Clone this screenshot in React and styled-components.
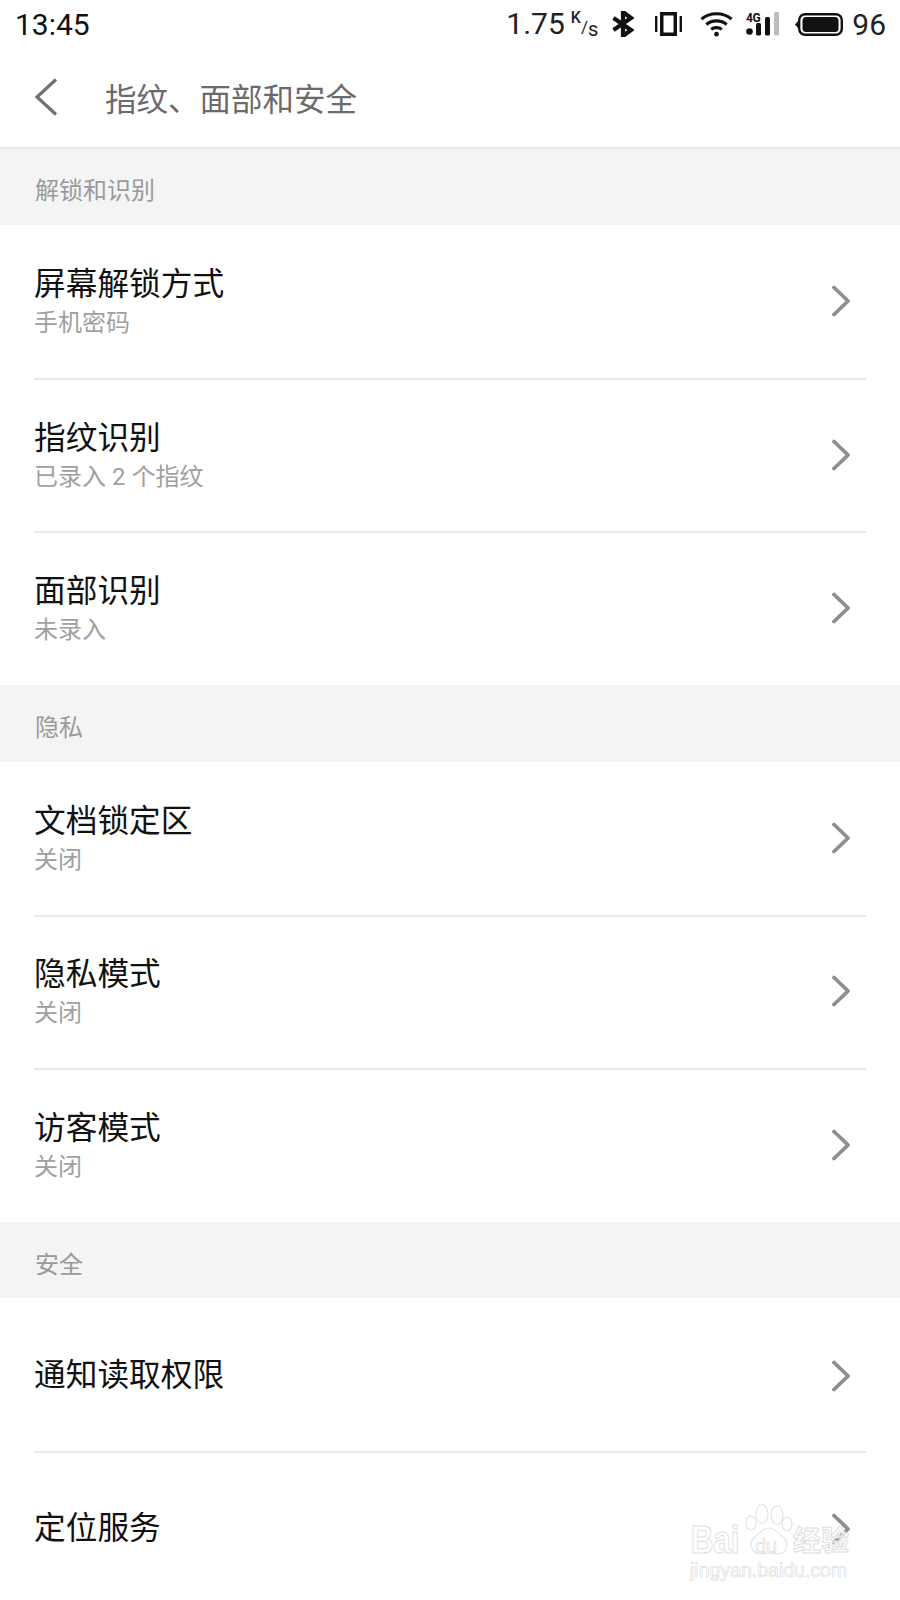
import styled, { createGlobalStyle } from "styled-components";

const sections = [
  {
    label: "解锁和识别",
    items: [
      { title: "屏幕解锁方式", sub: "手机密码" },
      { title: "指纹识别", sub: "已录入 2 个指纹" },
      { title: "面部识别", sub: "未录入" },
    ],
  },
  {
    label: "隐私",
    items: [
      { title: "文档锁定区", sub: "关闭" },
      { title: "隐私模式", sub: "关闭" },
      { title: "访客模式", sub: "关闭" },
    ],
  },
  {
    label: "安全",
    items: [{ title: "通知读取权限" }, { title: "定位服务" }],
  },
];

export default function App() {
  return (
    <Screen>
      <GlobalStyle />
      <StatusBar>
        <Clock>13:45</Clock>
        <StatusIcons>
          <Speed>
            1.75
            <SpeedK>K</SpeedK>
            <SpeedSlash>/</SpeedSlash>
            <SpeedS>s</SpeedS>
          </Speed>
          <Icon $gap={14} width="22" height="26" viewBox="0 0 22 26" fill="none" stroke="#111" strokeWidth="4.2">
            <path d="M1.5 7 19 19 11 25V1l8 6L1.5 19" />
          </Icon>
          <Icon $gap={21} width="27" height="24" viewBox="0 0 27 24" fill="none" stroke="#111">
            <rect x="6.75" y="1.75" width="13.5" height="20.5" strokeWidth="3.5" />
            <path d="M1.2 4v16M25.8 4v16" strokeWidth="2.4" />
          </Icon>
          <Icon $gap={18} width="33" height="26" viewBox="0 0 34 26" fill="none" stroke="#111" strokeWidth="3.2">
            <path d="M1.5 8C10 .5 24 .5 32.5 8" />
            <path d="M6.5 13.5c6-5 15-5 21 0" />
            <path d="M11.5 18.5c3-2.4 8-2.4 11 0" />
            <circle cx="17" cy="23.5" r="2.4" fill="#111" stroke="none" />
          </Icon>
          <Icon $gap={13} width="34" height="24" viewBox="0 0 34 24">
            <circle cx="3.5" cy="19.5" r="3.3" fill="#111" />
            <rect x="10" y="11" width="5" height="12.5" rx="1.5" fill="#111" />
            <rect x="19" y="5" width="5" height="18.5" rx="1.5" fill="#111" />
            <rect x="28" y="0" width="5" height="23.5" rx="1.5" fill="#bdbdbd" />
            <text x="0" y="10" fontFamily="Roboto, sans-serif" fontWeight="700" fontSize="12" letterSpacing="-0.5" fill="#111">
              4G
            </text>
          </Icon>
          <Icon $gap={15} width="48" height="23" viewBox="0 0 48 23">
            <rect x="4.2" y="1.2" width="42.6" height="20.6" rx="6" fill="none" stroke="#111" strokeWidth="2.4" />
            <rect x="7.5" y="4" width="36" height="15" rx="3.5" fill="#111" />
            <path d="M0 11.5 3 8v7Z" fill="#111" />
          </Icon>
          <Level>96</Level>
        </StatusIcons>
      </StatusBar>

      <TitleBar>
        <svg width="26" height="38" viewBox="0 0 26 38" fill="none" stroke="#6f6f6f" strokeWidth="3.2">
          <path d="M23 1.5 4 19l19 17.5" />
        </svg>
        <PageTitle>指纹、面部和安全</PageTitle>
      </TitleBar>

      {sections.map((section) => (
        <section key={section.label}>
          <SectionLabel>{section.label}</SectionLabel>
          {section.items.map((item) => (
            <Row key={item.title} $single={!item.sub}>
              <RowText>
                <RowTitle>{item.title}</RowTitle>
                {item.sub && <RowSub>{item.sub}</RowSub>}
              </RowText>
              <svg width="20" height="32" viewBox="0 0 20 32" fill="none" stroke="#8e8e8e" strokeWidth="3.8" strokeLinecap="round" strokeLinejoin="round">
                <path d="M3 2.5 17 16 3 29.5" />
              </svg>
            </Row>
          ))}
        </section>
      ))}

      {/* faint site stamp in the bottom corner */}
      <Watermark>
        <BrandLatin>Bai</BrandLatin>
        <Paw width="48" height="52" viewBox="0 0 48 52" fill="#fff" stroke="#e4e4e4" strokeWidth="1.2">
          <ellipse cx="17" cy="11" rx="6" ry="9.5" />
          <ellipse cx="32" cy="12" rx="6" ry="9.5" />
          <ellipse cx="6" cy="20" rx="5" ry="7" />
          <ellipse cx="42" cy="21" rx="5" ry="7" />
          <path d="M24 25c6 0 9 5 14 9 7 6 4 17-6 17-3 0-5-1-8-1s-5 1-8 1c-10 0-13-11-6-17 5-4 8-9 14-9Z" />
        </Paw>
        <PawText>du</PawText>
        <BrandCjk>经验</BrandCjk>
        <BrandDomain>jingyan.baidu.com</BrandDomain>
      </Watermark>
    </Screen>
  );
}

const GlobalStyle = createGlobalStyle`
  html, body {
    margin: 0;
    padding: 0;
    background: #fff;
  }
  * {
    box-sizing: border-box;
  }
  section {
    display: block;
  }
`;

const Screen = styled.div`
  position: relative;
  width: 900px;
  height: 1600px;
  overflow: hidden;
  background: #fff;
  font-family: "Roboto", "Noto Sans CJK SC", sans-serif;
`;

const StatusBar = styled.div`
  display: flex;
  align-items: center;
  justify-content: space-between;
  height: 48px;
  padding: 0 14px 0 15px;
`;

const Clock = styled.div`
  font-size: 30px;
  color: #111;
`;

const StatusIcons = styled.div`
  display: flex;
  align-items: center;
`;

const Icon = styled.svg`
  margin-left: ${(props) => props.$gap}px;
`;

const Speed = styled.div`
  display: flex;
  align-items: flex-start;
  height: 36px;
  font-size: 30px;
  line-height: 36px;
  color: #222;
`;

const SpeedK = styled.span`
  margin-left: 6px;
  font-size: 16px;
  font-weight: 500;
  line-height: 24px;
`;

const SpeedSlash = styled.span`
  font-size: 17px;
  line-height: 42px;
`;

const SpeedS = styled.span`
  font-size: 20px;
  line-height: 46px;
`;

const Level = styled.div`
  margin-left: 9px;
  font-size: 30px;
  color: #222;
`;

const TitleBar = styled.div`
  display: flex;
  align-items: center;
  height: 100.5px;
  padding-left: 33px;
  border-bottom: 2px solid #e6e6e6;
`;

const PageTitle = styled.h1`
  margin: 0 0 0 46px;
  font-size: 31.5px;
  font-weight: 400;
  color: #6b6b6b;
`;

const SectionLabel = styled.div`
  display: flex;
  align-items: center;
  height: 76.67px;
  padding: 4px 0 0 35px;
  font-size: 24px;
  color: #9a9a9a;
  background: #f4f4f4;
`;

const Row = styled.div`
  position: relative;
  display: flex;
  align-items: center;
  justify-content: space-between;
  height: 153.33px;
  margin: 0 34px;
  padding: ${(props) => (props.$single ? "2px 15px 0 0" : "0 15px 1px 0")};

  /* hairline between neighbouring rows */
  & + &::before {
    content: "";
    position: absolute;
    left: 0;
    right: 0;
    top: -0.5px;
    height: 2px;
    background: #e8e8e8;
  }
`;

const RowText = styled.div`
  display: flex;
  flex-direction: column;
`;

const RowTitle = styled.div`
  font-size: 31.7px;
  line-height: 44px;
  color: #111;
`;

const RowSub = styled.div`
  font-size: 24px;
  line-height: 32px;
  color: #a0a0a0;
`;

const Watermark = styled.div`
  position: absolute;
  left: 690px;
  top: 1500px;
  width: 165px;
  height: 84px;
`;

const Paw = styled.svg`
  position: absolute;
  left: 55px;
  top: 3px;
`;

const BrandLatin = styled.div`
  position: absolute;
  left: 1px;
  top: 21px;
  font-family: "Liberation Sans", sans-serif;
  font-size: 38px;
  font-weight: 700;
  line-height: 1;
  color: #fff;
  -webkit-text-stroke: 1px #e0e0e0;
  transform: scaleX(0.82);
  transform-origin: left center;
`;

const BrandCjk = styled.div`
  position: absolute;
  left: 103px;
  top: 25px;
  font-family: "Noto Sans CJK SC", sans-serif;
  font-size: 28px;
  font-weight: 700;
  line-height: 1;
  white-space: nowrap;
  color: rgba(255, 255, 255, 0.75);
  -webkit-text-stroke: 1px #dedede;
`;

const BrandDomain = styled.div`
  position: absolute;
  left: 0;
  top: 61px;
  font-family: "Liberation Sans", sans-serif;
  font-size: 19.5px;
  line-height: 1;
  white-space: nowrap;
  color: #fff;
  -webkit-text-stroke: 0.7px #e0e0e0;
`;

const PawText = styled.div`
  position: absolute;
  left: 65px;
  top: 36px;
  font-family: "Liberation Sans", sans-serif;
  font-size: 20px;
  line-height: 1;
  color: #fff;
  -webkit-text-stroke: 0.7px #dadada;
`;
